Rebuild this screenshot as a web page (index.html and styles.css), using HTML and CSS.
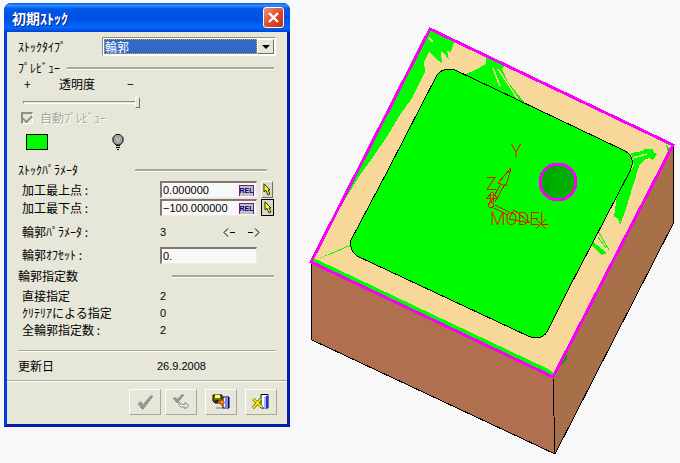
FILE: index.html
```html
<!DOCTYPE html>
<html lang="ja">
<head>
<meta charset="utf-8">
<title>初期ｽﾄｯｸ</title>
<link rel="stylesheet" href="styles.css">
</head>
<body>
<main class="workspace">
  <form class="dialog">
    <header class="titlebar">
      <h1>初期ｽﾄｯｸ</h1>
      <button type="button" class="close" aria-label="閉じる">
        <svg viewBox="0 0 19 19" width="19" height="19"><path d="M5 5l9 9M14 5l-9 9" stroke="#fff" stroke-width="2.4" fill="none"/></svg>
      </button>
    </header>
    <div class="content">
      <div class="type-row">
        <label for="type">ｽﾄｯｸﾀｲﾌﾟ</label>
        <span class="combo">
          <select id="type"><option>輪郭</option></select>
          <span class="combo-arrow"></span>
        </span>
      </div>

      <h2 class="group preview-title">ﾌﾟﾚﾋﾞｭｰ</h2>
      <div class="opacity-row">
        <span>+</span><label for="opacity">透明度</label><span>−</span>
      </div>
      <div class="slider-row"><input type="range" id="opacity" min="0" max="100" value="100"></div>
      <div class="check-row">
        <input type="checkbox" id="auto" checked disabled>
        <label for="auto">自動ﾌﾟﾚﾋﾞｭｰ</label>
      </div>
      <div class="swatch-row">
        <button type="button" class="swatch" aria-label="色"></button>
        <button type="button" class="bulb" aria-label="表示">
          <svg viewBox="0 0 12 16" width="12" height="16">
            <path d="M4 .5h4l3 3v4l-3 3.500H4L1 7.500v-4z" fill="#a0a0a0" stroke="#000"/>
            <path d="M4 3l2 5 2-5" fill="none" stroke="#c8c8c8"/>
            <path d="M4 11.500h4M4 13.500h4M5 15.500h2" stroke="#000"/><path d="M4 12.500h4" stroke="#ccc"/>
          </svg>
        </button>
      </div>

      <h2 class="group params-title">ｽﾄｯｸﾊﾟﾗﾒｰﾀ</h2>
      <div class="field">
        <label for="top">加工最上点 :</label>
        <span class="entry"><input type="text" id="top" value="0.000000"><button type="button" class="rel">REL</button></span>
        <button type="button" class="pick" aria-label="最上点を選択">
          <svg viewBox="0 0 8 13" width="8" height="13"><path d="M1 .8v8l2-1.500 2 4.700 2-1-2-4h2z" fill="#ff0" stroke="#000" stroke-width=".8"/></svg>
        </button>
      </div>
      <div class="field">
        <label for="bottom">加工最下点 :</label>
        <span class="entry"><input type="text" id="bottom" value="−100.000000"><button type="button" class="rel">REL</button></span>
        <button type="button" class="pick active" aria-label="最下点を選択">
          <svg viewBox="0 0 8 13" width="8" height="13"><path d="M1 .8v8l2-1.500 2 4.700 2-1-2-4h2z" fill="#ff0" stroke="#000" stroke-width=".8"/></svg>
        </button>
      </div>
      <div class="field nav-field">
        <span>輪郭ﾊﾟﾗﾒｰﾀ :</span>
        <output class="num">3</output>
        <span class="nav">
          <button type="button" aria-label="前へ"><svg viewBox="0 0 12 9" width="12" height="9"><path d="M5 .5l-4 4 4 4M7 4.500h5"/></svg></button>
          <button type="button" aria-label="次へ"><svg viewBox="0 0 12 9" width="12" height="9"><path d="M7 .5l4 4-4 4M0 4.500h5"/></svg></button>
        </span>
      </div>
      <div class="field offset-field">
        <label for="offset">輪郭ｵﾌｾｯﾄ :</label>
        <span class="entry"><input type="text" id="offset" value="0."></span>
      </div>

      <h2 class="group count-title">輪郭指定数</h2>
      <dl class="counts">
        <dt>直接指定</dt><dd>2</dd>
        <dt>ｸﾘﾃﾘｱによる指定</dt><dd>0</dd>
        <dt>全輪郭指定数 :</dt><dd>2</dd>
      </dl>
      <div class="updated"><span>更新日</span><time class="num" datetime="2008-09-26">26.9.2008</time></div>
    </div>

    <footer class="actions">
      <button type="button" disabled aria-label="OK">
        <svg viewBox="0 0 30 24" width="30" height="24"><path d="M8 13l3-2 2 3 8-9 2 1-10 13h-1z" fill="#999"/><path d="M8 14l4 5h1L23 6" fill="none" stroke="#555" stroke-dasharray="1 1"/></svg>
      </button>
      <button type="button" disabled aria-label="適用">
        <svg viewBox="0 0 30 24" width="30" height="24"><path d="M7 8l3-1 1 2 5-5 2 1-6 7-1 1z" fill="#999"/><path d="M7 8l4 5 7-8" fill="none" stroke="#666" stroke-dasharray="1 1"/><path d="M13 12v3l2 2h4v2l4-3.500-4-3v2h-3z" fill="#eee" stroke="#888"/></svg>
      </button>
      <button type="button" class="apart" aria-label="保存して閉じる">
        <svg viewBox="0 0 30 24" width="30" height="24"><path d="M7 5h9v8H9l-2-2z" fill="#770" stroke="#000"/><path d="M9 5h5v3H9z" fill="#ff8"/><path d="M9 10h4v3H9z" fill="#222"/><path d="M10 18h7" stroke="#777"/><path d="M17 7h6v11h-6z" fill="#fff" stroke="#000"/><path d="M19 8l4-1v10l-4 2z" fill="#78f"/><path d="M22.500 7v11" stroke="#00a"/><path d="M12 11h3V9l4 3.500-4 3V13h-3z" fill="#f80" stroke="#930" stroke-width=".6"/></svg>
      </button>
      <button type="button" class="apart" aria-label="取消">
        <svg viewBox="0 0 30 24" width="30" height="24"><path d="M15 4.500h7V18h-7z" fill="#fff" stroke="#000"/><path d="M18 7l4-2v12l-4 2z" fill="#9bf"/><path d="M21 6v12" stroke="#23d" stroke-width="2"/><path d="M7 9l9 8M15 9l-8 9" stroke="#550" stroke-width="3"/><path d="M7 9l9 8M15 9l-8 9" stroke="#fe0" stroke-width="1.800"/></svg>
      </button>
    </footer>
  </form>

  <svg class="model" viewBox="290 0 390 463" preserveAspectRatio="xMinYMin meet" role="img" aria-label="MODEL">
    <g shape-rendering="crispEdges">
      <path d="M311 262L553 377l2 77L312 340z" fill="#b0704f"/>
      <path d="M553 377L673 145l1 77L555 454z" fill="#a87048"/>
      <path d="M430 29L673 145 553 377 311 262z" fill="#f8d898"/>
      <g fill="#00fc00">
        <path d="M430 30l24 12-3 10-4-1 2 9-5-7-3-1 1 11-7-5-6-6-5 10 1 10-5 10-8 16-12 17-12 20-17 25-11 15-18 29-5 4-25 51z"/>
        <path d="M464 75l11-5 11-6V57l18 9-2 3 6 13 16 20-14-3z"/>
        <path d="M631 153l12-2 1-2h9l1 4 3 1-4 6-4-2-5 2-4 4-4 12-5 16-6 20-5 13-2-7-4-1 3-22 17-30z"/>
        <path d="M592 241l15 12-6 2-12-12zM666 145l3 2-1 6zM652 136l6 2v2z"/>
        <path d="M311 261l3-2 4 1L548 369l5 3v5z"/>
      </g>
      <path d="M328 255l23-10M598 231l11 19M598 237l8 11" fill="none" stroke="#00fc00"/>
      <path d="M320 258l8-3" stroke="#00fc00" stroke-dasharray="1 2"/>
      <path d="M493 68l7 18M498 69l21 32M633 158l14-4M429 38l4 4" fill="none" stroke="#f8d898" stroke-width="1.500"/>
      <path d="M559 362l8-12v9l-9 10zM554 425h1v8h-1z" fill="#00a000"/>
      <path d="M388 170L437 75Q443 67 455 70L623 150Q634 155 632 165L630 171 568 290 547 332Q541 341 528 336L357 256Q349 250 351 240z" fill="#00fc00" stroke="#000"/>
      <path d="M311 262l1 78 243 114 119-232-1-77M553 377l2 77" fill="none" stroke="#000"/>
      <path d="M430 29L673 145 553 377 311 262z" fill="none" stroke="#f800f8" stroke-width="3"/>
      <circle cx="558" cy="182" r="17" fill="#00b000"/>
      <path d="M545 170q9-8 18-3-16 13-14 29-14-12-4-26z" fill="#00a800"/>
      <circle cx="558" cy="182" r="18" fill="none" stroke="#f800f8" stroke-width="3"/>
      <g fill="none" stroke="#e01800">
        <circle cx="491" cy="205" r="2.500"/>
        <path d="M491 202l10-19M495 202l10-18M498 183l13-15-5 18z"/>
        <path d="M490 202v-9M493 202v-9M487 198l5-6 5 6z"/>
        <path d="M495 205l14 7M494 208l14 7M514 210l-5 9 21 4zM536 219l10 10M546 219l-10 10"/>
      </g>
    </g>
    <g class="axis-text">
      <text x="511" y="157">Y</text>
      <text x="486" y="190">Z</text>
      <text x="490" y="225">MODEL</text>
    </g>
  </svg>
</main>
</body>
</html>
```
FILE: styles.css
```css
* { box-sizing: border-box; }

body {
  margin: 0;
  background: #f8f8f8;
  color: #000;
  font: 12px/16px "Noto Sans CJK JP", sans-serif;
}

button, input, select { margin: 0; padding: 0; font: inherit; color: inherit; border-radius: 0; }
button { display: flex; align-items: center; justify-content: center; }
h1, h2, dl, dd { margin: 0; font-size: inherit; font-weight: 400; }

.workspace { display: flex; align-items: flex-start; padding-left: 4px; }
.model { flex: 1; min-width: 0; display: block; }
.axis-text { fill: #e01800; font: 300 18px Roboto, sans-serif; }

.dialog {
  flex: 0 0 286px;
  margin-top: 3px;
  border: 3px solid #0040dc;
  border-top: 0;
  border-right-color: #0020a8;
  border-bottom-color: #0020a8;
  border-radius: 7px 7px 0 0;
  background: #e6e7d8;
}

.titlebar {
  display: flex;
  align-items: center;
  justify-content: space-between;
  height: 29px;
  margin: 0 -3px;
  padding: 0 6px 0 8px;
  border-radius: 7px 7px 0 0;
  background: linear-gradient(#0058e0, #3090ff 8%, #0058e8 20%, #0050e0 55%, #0068ff 85%, #0040d0);
}
.titlebar h1 {
  color: #fff;
  font: bold 14px/20px "Noto Sans CJK JP", sans-serif;
  text-shadow: 1px 1px #002080;
}
.close {
  width: 21px;
  height: 21px;
  border: 1px solid #fff;
  border-radius: 3px;
  background: linear-gradient(135deg, #f09078, #e05030 50%, #c03010);
}

.content { padding-left: 11px; }

.type-row { display: flex; align-items: center; height: 29px; padding-right: 11px; }
.type-row label { width: 84px; }
.combo {
  display: flex;
  flex: 1;
  height: 19px;
  padding: 1px;
  border: 1px solid;
  border-color: #908f80 #fff #fff #908f80;
  background: #fff;
}
.combo select {
  flex: 1;
  appearance: none;
  border: 1px dotted #e0a040;
  outline: 0;
  background: #316ac5;
  color: #fff;
  line-height: 13px;
}
.combo-arrow {
  display: grid;
  place-items: center;
  width: 17px;
  border: 1px solid;
  border-color: #fff #706f60 #706f60 #fff;
  background: #e6e7d8;
}
.combo-arrow::after { content: ""; border: 4px solid transparent; border-top-color: #000; border-bottom: 0; }

.group { display: flex; align-items: center; }
.group::after { content: ""; flex: 1; height: 2px; background: #a8a898; border-bottom: 1px solid #fff; }
.preview-title { height: 14px; gap: 7px; padding-right: 13px; }
.params-title { height: 22px; gap: 57px; padding-right: 20px; }
.count-title { height: 22px; gap: 94px; padding-right: 13px; }

.opacity-row { display: grid; grid-template-columns: 35px 68px auto; align-items: center; height: 18px; padding-left: 6px; }
.slider-row { display: flex; align-items: center; height: 18px; padding-left: 5px; }
.slider-row input { appearance: none; width: 118px; height: 11px; background: none; }
.slider-row input::-webkit-slider-runnable-track {
  height: 3px;
  border: 1px solid;
  border-color: #908f80 #fff #fff #908f80;
}
.slider-row input::-webkit-slider-thumb {
  appearance: none;
  width: 5px;
  height: 11px;
  margin-top: -5px;
  border: 1px solid;
  border-color: #fff #706f60 #706f60 #fff;
  background: #e6e7d8;
}

.check-row { display: flex; align-items: center; gap: 7px; height: 14px; padding-left: 3px; color: #a8a898; text-shadow: 1px 1px #fff; }
.check-row input {
  display: grid;
  place-items: center;
  appearance: none;
  width: 12px;
  height: 12px;
  border: 1px solid;
  border-width: 2px 1px 1px 2px;
  border-color: #908f80 #fff #fff #908f80;
}
.check-row input::after { content: ""; width: 7px; height: 4px; margin-top: -2px; border: solid #908f80; border-width: 0 0 2px 2px; transform: rotate(-45deg); }

.swatch-row { display: flex; align-items: center; gap: 64px; height: 34px; padding-left: 8px; }
.swatch { width: 22px; height: 16px; border: 1px solid #000; background: #00fc00; }
.bulb { border: 0; background: none; }

.field { display: grid; grid-template-columns: 134px 97px 13px; column-gap: 4px; height: 18px; padding-left: 4px; }
.field > label { padding-top: 1px; }
.entry {
  display: flex;
  align-items: center;
  height: 17px;
  padding: 0 2px 0 1px;
  border: 1px solid;
  border-width: 2px 1px 1px 2px;
  border-color: #807870 #f4e8e0 #f4e8e0 #807870;
  background: #f8f8f8;
}
.entry input { flex: 1; min-width: 0; border: 0; outline: 0; background: none; line-height: 13px; }
.entry input, .num, dd { font: 11px/16px "Liberation Sans", sans-serif; }
.rel {
  height: 11px;
  width: 15px;
  border: 1px solid #801880;
  border-bottom: 0;
  background: #c0c0c0;
  color: #000080;
  font: bold 7px/8px "Liberation Sans", sans-serif;
}
.pick { width: 12px; height: 17px; border: 1px solid; border-color: #fff #706f60 #706f60 #fff; background: #d8d8cc; }
.pick.active { width: 13px; border: 1px solid #000; }
.nav-field { height: 30px; align-items: center; grid-template-columns: 134px 59px 37px; }
.nav { display: flex; justify-content: space-between; }
.nav button { border: 0; background: none; }
.nav path { fill: none; stroke: #000; }
.offset-field > label { padding-top: 0; }

.counts { display: grid; grid-template-columns: 138px 1fr; grid-auto-rows: 17px; align-items: center; padding: 0 0 12px 4px; }
.updated {
  display: grid;
  grid-template-columns: 139px 1fr;
  align-items: center;
  height: 30px;
  margin-right: 11px;
  border-top: 1px solid #a8a898;
  box-shadow: inset 0 1px #fff;
}

.actions {
  display: flex;
  justify-content: flex-end;
  gap: 4px;
  padding: 8px 10px 9px;
  border-top: 1px solid #a8a898;
  box-shadow: inset 0 1px #fff;
}
.actions button {
  width: 32px;
  height: 26px;
  border: 1px solid;
  border-color: #fff #a8a898 #a8a898 #fff;
  background: #e6e7d8;
}
.actions .apart { margin-left: 4px; }
```
